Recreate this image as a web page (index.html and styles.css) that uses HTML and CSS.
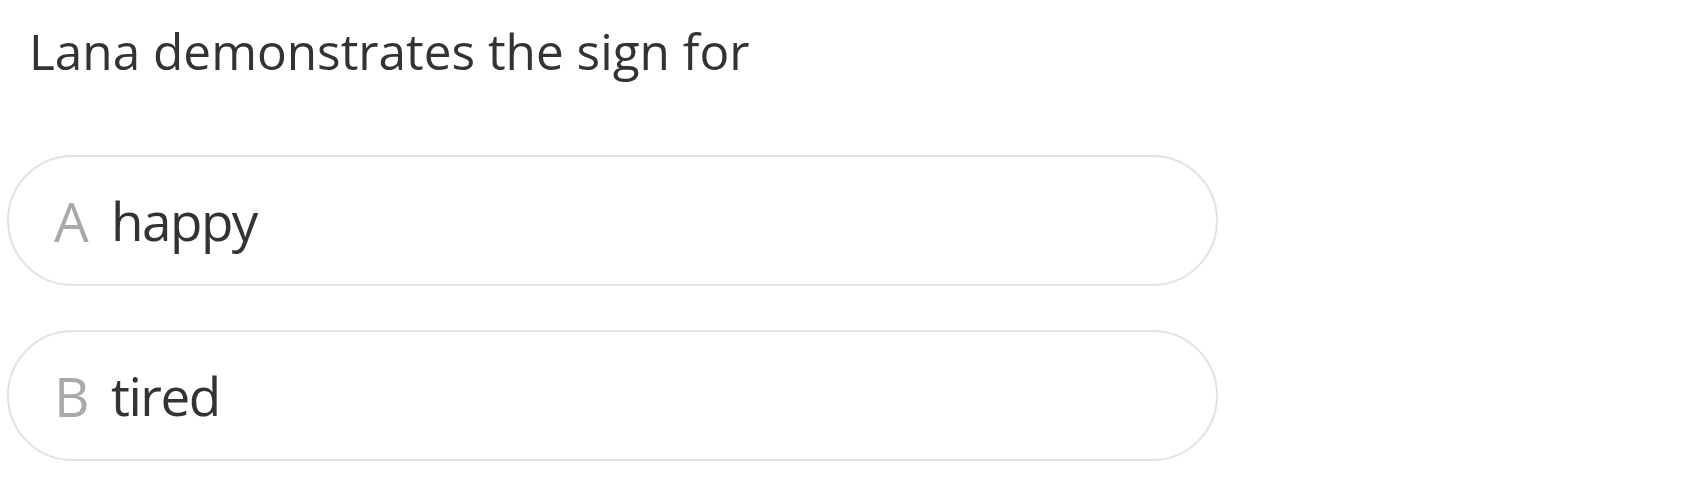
FILE: index.html
```html
<!DOCTYPE html>
<html>
<head>
<meta charset="utf-8">
<link rel="stylesheet" href="styles.css">
</head>
<body>
<div class="quiz">
  <div class="question">Lana demonstrates the sign for</div>
  <div class="options">
    <div class="option"><span class="letter">A</span><span class="answer">happy</span></div>
    <div class="option"><span class="letter">B</span><span class="answer">tired</span></div>
  </div>
</div>
</body>
</html>
```
FILE: styles.css
```css
html, body {
  margin: 0;
  background: #ffffff;
}
body {
  padding: 8px 8px 8px 7px;
  font-family: "Open Sans", "Noto Sans", sans-serif;
  color: #333333;
}
.quiz {
  width: 1211px;
  display: flex;
  flex-direction: column;
}
.question {
  padding: 11px 0 0 22px;
  font-size: 49.5px;
  line-height: 64px;
  letter-spacing: 0;
}
.options {
  margin-top: 72px;
  display: flex;
  flex-direction: column;
  gap: 44px;
}
.option {
  box-sizing: border-box;
  height: 131px;
  border: 2px solid #e2e2e2;
  border-radius: 66px;
  display: flex;
  align-items: center;
  padding-left: 45px;
  font-size: 53px;
}
.letter {
  color: #a9a9a9;
  width: 57px;
  font-size: 55px;
  letter-spacing: 0;
}
.answer {
  color: #333333;
  letter-spacing: -1.5px;
}
```
